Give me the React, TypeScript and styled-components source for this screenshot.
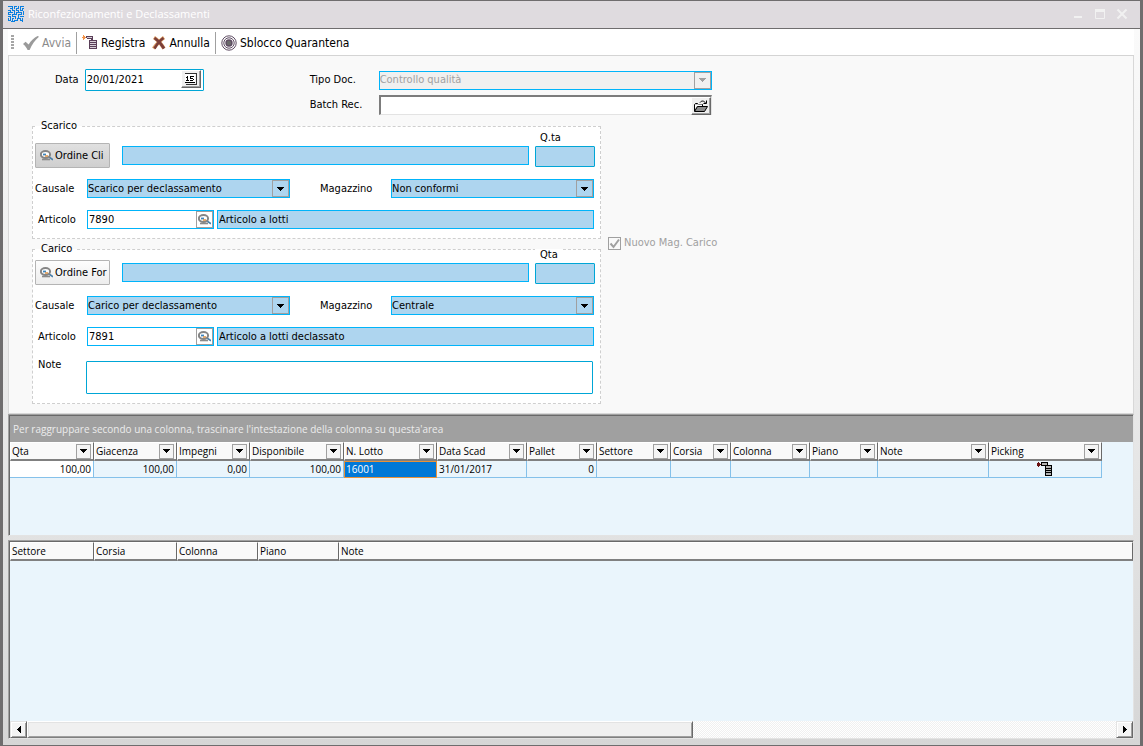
import React, { useId } from "react";
import styled, { createGlobalStyle } from "styled-components";

const formFont = '"DejaVu Sans Condensed", Tahoma, sans-serif';
const gridFont = '"Open Sans", "Segoe UI", sans-serif';

const GlobalStyle = createGlobalStyle`
  *, *::before, *::after { box-sizing: border-box; }
  body { margin: 0; background: #6f6d6e; }
  button, input, select, textarea { font: inherit; color: inherit; margin: 0; border-radius: 0; }
`;

/* ---------- window frame ---------- */

const Window = styled.div`
  min-height: 100vh;
  display: flex;
  flex-direction: column;
  padding: 1px 3px 1px;
  background: #6f6d6e;
  font: 11px/14px ${formFont};
  color: #000;
`;

const TitleBar = styled.header`
  display: flex;
  align-items: center;
  height: 28px;
  padding: 0 10px 2px 5px;
  gap: 4px;
  background: #dfdbdf;
  border-bottom: 1px solid #6f6d6e;
  color: #fff;
`;

const Title = styled.h1`
  flex: 1;
  margin: 0;
  font: 11px/16px ${gridFont};
`;

const CaptionButtons = styled.div`
  display: flex;
  gap: 6px;
`;

const CaptionButton = styled.button`
  width: 16px;
  height: 16px;
  padding: 0;
  border: 0;
  background: none;
  color: #f1f1f1;
  svg { display: block; }
`;

const Body = styled.main`
  flex: 1;
  display: flex;
  flex-direction: column;
  padding: 0 6px 6px 5px;
  background: linear-gradient(#fafafa, #e6e6e6 60%, #d6d6d6);
`;

/* ---------- toolbar ---------- */

const Toolbar = styled.nav`
  display: flex;
  align-items: center;
  height: 27px;
  padding: 1px 3px 0;
  background: #fff;
  border-bottom: 1px solid #d4d4d4;
  font-size: 12px;
  line-height: 16px;
`;

const Grip = styled.span`
  width: 3px;
  height: 15px;
  margin-right: 4px;
  background: repeating-linear-gradient(#a6a6a6 0 2px, #fff 2px 3px);
`;

const ToolGroup = styled.div`
  display: flex;
  gap: 7px;
  padding: 0 5px;
  & + & { border-left: 1px solid #a0a0a0; }
`;

const ToolButton = styled.button`
  display: flex;
  align-items: center;
  gap: 3px;
  height: 22px;
  padding: 0;
  border: 0;
  background: none;
  white-space: nowrap;
  &:disabled { color: #8a8a8a; }
  svg { flex: none; }
`;

/* ---------- form ---------- */

const FormPanel = styled.form`
  padding: 13px 23px 9px;
  background: #f9f9f9;
  border: solid #d8d8d8;
  border-width: 0 1px 1px;
`;

const TopFields = styled.div`
  display: flex;
  align-items: flex-start;
  gap: 106px;
  padding-left: 23px;
`;

const DateGroup = styled.div`
  display: flex;
  align-items: center;
  gap: 6px;
`;

const DocGroup = styled.div`
  display: grid;
  grid-template-columns: 69px 333px;
  grid-template-rows: 20px 20px;
  align-items: center;
  row-gap: 5px;
  padding-top: 1px;
`;

const Label = styled.label<{ $indent?: number }>`
  padding-left: ${(p) => p.$indent ?? 0}px;
  white-space: nowrap;
`;

const NotesLabel = styled(Label)`
  align-self: start;
`;

const DateBox = styled.div`
  display: flex;
  width: 119px;
  height: 22px;
  padding-right: 2px;
  background: #fff;
  border: 1px solid #00a6d6;
  border-radius: 1px;
`;

const BevelButton = styled.button`
  display: flex;
  align-items: center;
  justify-content: center;
  width: 20px;
  height: 18px;
  padding: 0;
  background: #f0f0f0;
  border: 1px solid;
  border-color: #fff #696969 #696969 #fff;
  box-shadow: inset -1px -1px #a0a0a0;
`;

const SunkenBox = styled.div`
  display: flex;
  height: 20px;
  background: #fff;
  border: solid;
  border-width: 2px 1px 1px 2px;
  border-color: #7c7c7c #e3e3e3 #e3e3e3 #7c7c7c;
`;

const BareInput = styled.input`
  flex: 1;
  min-width: 0;
  padding: 0 1px;
  border: 0;
  background: none;
  outline: 0;
`;

const Columns = styled.div`
  display: flex;
  align-items: flex-start;
  gap: 7px;
  margin-top: 5px;
`;

const Groups = styled.div`
  display: flex;
  flex-direction: column;
  gap: 4px;
  width: 569px;
`;

const Group = styled.fieldset`
  min-width: 0;
  margin: 0;
  padding: 0 6px 9px 2px;
  background: #fff;
  border: 1px dashed #cfcfcf;
`;

const Legend = styled.legend`
  margin-left: 1px;
  padding: 0 5px;
  line-height: 12px;
`;

const OrderRow = styled.div<{ $top: number }>`
  display: flex;
  align-items: center;
  height: ${(p) => p.$top + 25}px;
  margin-right: -1px;
  padding-top: ${(p) => p.$top}px;
`;

const OrderButton = styled.button<{ $pressed?: boolean }>`
  display: flex;
  align-items: center;
  gap: 2px;
  width: 75px;
  height: 25px;
  margin-right: 12px;
  padding: 0 4px;
  white-space: nowrap;
  border: 1px solid #b4b4b4;
  border-radius: 1px;
  background: ${(p) =>
    p.$pressed ? "linear-gradient(#e0e0e0, #cfcfcf)" : "linear-gradient(#fdfdfd, #ededed)"};
  svg { flex: none; }
`;

const BlueInput = styled.input`
  flex: 1;
  min-width: 0;
  height: 19px;
  padding: 0 1px;
  background: #aed5ef;
  border: 1px solid #00b4fa;
  outline: 0;
`;

const QuantityField = styled.div`
  display: flex;
  flex-direction: column;
  gap: 2px;
  width: 60px;
  margin: -12px 0 0 6px;
  ${BlueInput} {
    flex: none;
    height: 21px;
    border-color: #00a6d6;
    border-radius: 1px;
  }
`;

const QuantityLabel = styled.label`
  align-self: flex-start;
  padding: 0 5px;
  background: #fff;
  line-height: 12px;
`;

const FieldGrid = styled.div`
  display: grid;
  grid-template-columns: 52px 203px 101px 203px;
  align-items: center;
  row-gap: 12px;
  margin-top: 11px;
`;

const ArticleFields = styled.div`
  grid-column: 2 / -1;
  display: flex;
  gap: 3px;
`;

const LookupBox = styled.div`
  display: flex;
  width: 127px;
  height: 19px;
  background: #fff;
  border: 1px solid #00b4fa;
`;

const LookupButton = styled.button`
  display: flex;
  align-items: center;
  justify-content: center;
  width: 17px;
  padding: 0;
  background: #fff;
  border: 1px solid #a0a0a0;
`;

const NotesArea = styled.textarea`
  grid-column: 2 / -1;
  display: block;
  height: 33px;
  margin: 3px 1px 0 -1px;
  background: #fff;
  border: 1px solid #00a6d6;
  border-radius: 1px;
  outline: 0;
  resize: none;
`;

const SelectWrap = styled.div`
  position: relative;
  height: 19px;
`;

const Select = styled.select`
  appearance: none;
  display: block;
  width: 100%;
  height: 19px;
  padding: 0 20px 0 0;
  line-height: 14px;
  background: #aed5ef;
  border: 1px solid #00b4fa;
  outline: 0;
  &:disabled { background: #f0f0f0; color: #a0a0a0; opacity: 1; }
`;

const SelectArrow = styled.span<{ $muted?: boolean }>`
  position: absolute;
  top: 1px;
  right: 1px;
  display: flex;
  align-items: center;
  justify-content: center;
  width: 17px;
  height: 17px;
  border: 1px solid #a0a0a0;
  color: ${(p) => (p.$muted ? "#a0a0a0" : "#000")};
  pointer-events: none;
`;

const CheckLabel = styled.label`
  display: flex;
  align-items: center;
  gap: 3px;
  margin-top: 116px;
  color: #a0a0a0;
`;

const CheckInput = styled.input`
  appearance: none;
  width: 13px;
  height: 13px;
  background: #f9f9f9;
  border: 1px solid #a0a0a0;
`;

const CheckBox = styled.span`
  position: relative;
  display: flex;
  svg { position: absolute; inset: 0; pointer-events: none; }
`;

/* ---------- grids ---------- */

const GridPanel = styled.section<{ $grow?: boolean }>`
  display: flex;
  flex-direction: column;
  flex: ${(p) => (p.$grow ? "1 1 auto" : "none")};
  min-height: 122px;
  background: #eaf5fc;
  border: solid;
  border-width: 1px;
  border-color: #a0a0a0 #e3e3e3 #e3e3e3 #a0a0a0;
  box-shadow: inset 1px 1px #696969;
  padding: 1px 0 0 1px;
  font: 10px/14px ${gridFont};
  & + & { margin-top: 4px; }
`;

const GroupBar = styled.div`
  height: 26px;
  padding: 6px 3px;
  background: #a0a0a0;
  color: #ececec;
`;

const Table = styled.table<{ $fill?: boolean }>`
  table-layout: fixed;
  border-collapse: separate;
  border-spacing: 0;
  width: ${(p) => (p.$fill ? "100%" : "0")};
`;

const Col = styled.col<{ $w?: number }>`
  width: ${(p) => (p.$w ? `${p.$w}px` : "auto")};
`;

const HeadCell = styled.th`
  height: 19px;
  padding: 0;
  background: #f9f9f9;
  border: solid;
  border-width: 1px 1px 2px;
  border-color: #fff #696969 #808080 #fff;
  font-weight: 400;
  text-align: left;
`;

const HeadContent = styled.div`
  display: flex;
  align-items: center;
  justify-content: space-between;
  height: 16px;
  padding: 0 2px 0 1px;
  white-space: nowrap;
`;

const FilterButton = styled.button`
  display: flex;
  align-items: center;
  justify-content: center;
  width: 15px;
  height: 15px;
  padding: 0;
  background: #f4f4f4;
  border: 1px solid #a0a0a0;
`;

type CellKind = "plain" | "number" | "first" | "selected" | "icon";

const Cell = styled.td<{ $kind?: CellKind }>`
  height: 17px;
  padding: 0 2px;
  line-height: 14px;
  text-align: ${(p) =>
    p.$kind === "number" || p.$kind === "first" ? "right" : p.$kind === "icon" ? "center" : "left"};
  background: ${(p) =>
    p.$kind === "first" ? "#fff" : p.$kind === "selected" ? "#0078d7" : "transparent"};
  color: ${(p) => (p.$kind === "selected" ? "#fff" : "#000")};
  border: solid #85c1ea;
  border-width: 0 1px 1px 0;
  ${(p) => p.$kind === "selected" && "outline: 1px solid #e8923a; outline-offset: -1px;"}
  svg { display: block; margin: 0 auto; }
`;

const ScrollBar = styled.div`
  display: flex;
  height: 17px;
  margin-top: auto;
`;

const ScrollButton = styled.button`
  display: flex;
  align-items: center;
  justify-content: center;
  flex: none;
  width: 17px;
  padding: 0;
  background: #f4f4f4;
  border: 1px solid;
  border-color: #e3e3e3 #696969 #696969 #e3e3e3;
  box-shadow: inset 1px 1px #fff, inset -1px -1px #a0a0a0;
`;

const ScrollTrack = styled.div`
  flex: 1;
  background: repeating-conic-gradient(#f0f0f0 0 25%, #fff 0 50%) 0 0 / 2px 2px;
`;

const ScrollThumb = styled.div`
  width: 61.2%;
  height: 17px;
  background: #f0f0f0;
  border: 1px solid;
  border-color: #fff #696969 #808080 #fff;
  box-shadow: inset 1px 1px #e3e3e3, inset -1px -1px #a0a0a0;
`;

/* ---------- icons ---------- */

const DownArrow = () => (
  <svg width="7" height="4" viewBox="0 0 7 4" shapeRendering="crispEdges" fill="currentColor">
    <path d="M0 0h7v1H0zM1 1h5v1H1zM2 2h3v1H2zM3 3h1v1H3z" />
  </svg>
);

const SideArrow = ({ right = false }: { right?: boolean }) => (
  <svg width="4" height="7" viewBox="0 0 4 7" shapeRendering="crispEdges">
    <path d={right ? "M0 0h1v1h1v1h1v1h1v1H3v1H2v1H1v1H0z" : "M4 0H3v1H2v1H1v1H0v1h1v1h1v1h1v1h1z"} />
  </svg>
);

const MazeLogo = () => (
  <svg width="16" height="16" viewBox="0 0 16 16" fill="none" stroke="#0a7fe0" shapeRendering="crispEdges">
    <path d="M0 .5h5M1.500 2.500h3M4.500 0v5M6.500 0v3M6 .5h3M8.500 2v3M8 2.500h3M10.500 0v3M12.500 0v5M12 .5h4M14.500 2v3M14 2.500h2M0 4.500h3M2.500 4v3M4 4.500h3M6.500 4v4M8 4.500h3M10.500 4v3M12 4.500h2M0 6.500h5M.5 6v3M8.500 6v3M8 6.500h6M13.500 6v3M15.500 5v4M0 8.500h3M4.500 8v3M4 8.500h5M10 8.500h3M10.500 8v4M12 10.500h4M2.500 10v4M0 10.500h3M4 10.500h4M7.500 10v3M.5 12v3M4.500 12v4M4 12.500h2M9 12.500h4M12.500 12v3M14.500 12v4M9.500 12v3M0 14.500h3M6 14.500h4M12 14.500h3M6.500 14v2M3 15.500h3" />
  </svg>
);

const CheckIcon = () => (
  <svg width="16" height="16" viewBox="0 0 16 16" fill="#9a9a9a">
    <path d="M0 9l2.600-2.200 3 2.600C8 5.600 11 2.700 14.600 1L16 1.800C12 5.200 9 9.600 6.600 15H4.600C3.500 12.600 2 10.600 0 9z" />
  </svg>
);

const RegisterIcon = () => (
  <svg width="16" height="16" viewBox="0 0 16 16" shapeRendering="crispEdges">
    <path d="M0 2h1V0h1v1h1v1h1v1H3v1H2v1H1V3H0z" fill="#f4944a" />
    <path d="M4 1h7v4H9V4H5V3H4zM7 5h8v9H7z" fill="#5a3f58" />
    <path d="M5 2h5v1H5zM8 6h6v1H8zM8 8h6v1H8zM8 10h6v1H8zM8 12h6v1H8z" fill="#d8d0d8" />
  </svg>
);

const CancelIcon = () => (
  <svg width="14" height="14" viewBox="0 0 14 14">
    <path d="M2 1.500c3 2 7 6 10 11M12 1.500C8.500 4 5 8 1.500 12.500" fill="none" stroke="#dc9a62" strokeWidth="3.600" />
    <path d="M2.500 2c3 2 7 6 9.500 10.500M11.500 2C8.500 4 5 8 2.500 12.500" fill="none" stroke="#7a3f3a" strokeWidth="2.600" />
  </svg>
);

const TargetIcon = () => (
  <svg width="16" height="16" viewBox="0 0 16 16" fill="none" stroke="#5e4c63">
    <circle cx="8" cy="8" r="7.200" strokeWidth="1" />
    <circle cx="8" cy="8" r="5.200" strokeWidth="1" />
    <circle cx="8" cy="8" r="3" fill="#6a6a6a" strokeWidth="1.400" />
  </svg>
);

const LookupIcon = () => (
  <svg width="13" height="11" viewBox="0 0 13 11">
    <path d="M9 7l4 2.800" stroke="#4a7fa8" strokeWidth="1.600" />
    <ellipse cx="5.500" cy="4.500" rx="4.600" ry="3.400" fill="#fff" stroke="#858585" strokeWidth="2" />
    <path d="M2 9.500h8" stroke="#8a8a8a" strokeWidth="1.600" />
    <path d="M3 4.500h3" stroke="#3f86bd" strokeWidth="1.800" />
    <path d="M5 6h3" stroke="#d88a3a" strokeWidth="1.400" />
  </svg>
);

const CalendarIcon = () => (
  <svg width="12" height="12" viewBox="0 0 12 12" shapeRendering="crispEdges">
    <path d="M0 0h12v12H1v-1h10V1H0z" fill="#333" />
    <path d="M0 1h10v9H0z" fill="#fff" />
    <path d="M0 9h10v1H0zM2 3h1v5H2zM1 4h1v1H1zM1 7h3v1H1zM5 3h4v1H5zM5 3h1v3H5zM5 5h3v1H5zM8 6h1v1H8zM5 7h3v1H5z" />
  </svg>
);

const FolderIcon = () => (
  <svg width="14" height="12" viewBox="0 0 14 12" fill="none" stroke="#000">
    <path d="M.5 11V4.500L1.500 3.500h2l1 1h4v2M.5 11.500l3-5h10l-3 5z" fill="#8c8c8c" />
    <path d="M1 4.500h7V6H3L1 9z" fill="#fff" stroke="none" />
    <path d="M6 2.500C7.500.5 10 .5 11.500 3M12.500.5v3h-3" />
  </svg>
);

const PickingIcon = () => (
  <svg width="16" height="14" viewBox="0 0 16 14" shapeRendering="crispEdges">
    <path d="M1 0h1v1h1v1h1v1H3v1H2v1H1V4H0V1h1z" fill="#6a1010" />
    <path d="M4 0h7v4H4zM8 3h7v11H8z" />
    <path d="M5 1h5v2H5zM9 4h5v2H9zM9 7h5v1H9zM9 9h5v1H9zM9 11h5v2H9z" fill="#b4b4b4" />
  </svg>
);

const CheckMark = () => (
  <svg width="13" height="13" viewBox="0 0 13 13" fill="none" stroke="#a0a0a0" strokeWidth="2">
    <path d="M2.500 6.500l3 3.500L11 2.500" />
  </svg>
);

/* ---------- parts ---------- */

const ComboBox = ({ id, value, disabled }: { id: string; value: string; disabled?: boolean }) => (
  <SelectWrap>
    <Select id={id} defaultValue={value} disabled={disabled}>
      <option>{value}</option>
    </Select>
    <SelectArrow $muted={disabled}><DownArrow /></SelectArrow>
  </SelectWrap>
);

type MovementProps = {
  legend: string;
  order: string;
  quantity: string;
  reason: string;
  warehouse: string;
  article: string;
  description: string;
  top: number;
  pressed?: boolean;
  notes?: boolean;
};

const MovementGroup = (p: MovementProps) => {
  const id = useId();
  return (
    <Group>
      <Legend>{p.legend}</Legend>
      <OrderRow $top={p.top}>
        <OrderButton type="button" $pressed={p.pressed}><LookupIcon />{p.order}</OrderButton>
        <BlueInput aria-label={p.order} />
        <QuantityField>
          <QuantityLabel htmlFor={`${id}q`}>{p.quantity}</QuantityLabel>
          <BlueInput id={`${id}q`} />
        </QuantityField>
      </OrderRow>
      <FieldGrid>
        <Label htmlFor={`${id}c`}>Causale</Label>
        <ComboBox id={`${id}c`} value={p.reason} />
        <Label htmlFor={`${id}m`} $indent={30}>Magazzino</Label>
        <ComboBox id={`${id}m`} value={p.warehouse} />
        <Label htmlFor={`${id}a`} $indent={3}>Articolo</Label>
        <ArticleFields>
          <LookupBox>
            <BareInput id={`${id}a`} defaultValue={p.article} />
            <LookupButton type="button" aria-label="Cerca articolo"><LookupIcon /></LookupButton>
          </LookupBox>
          <BlueInput aria-label="Descrizione articolo" defaultValue={p.description} />
        </ArticleFields>
        {p.notes && (
          <>
            <NotesLabel htmlFor={`${id}n`} $indent={3}>Note</NotesLabel>
            <NotesArea id={`${id}n`} />
          </>
        )}
      </FieldGrid>
    </Group>
  );
};

const lotColumns: { name: string; width: number; value?: string; kind?: CellKind }[] = [
  { name: "Qta", width: 84, value: "100,00", kind: "first" },
  { name: "Giacenza", width: 83, value: "100,00", kind: "number" },
  { name: "Impegni", width: 73, value: "0,00", kind: "number" },
  { name: "Disponibile", width: 94, value: "100,00", kind: "number" },
  { name: "N. Lotto", width: 93, value: "16001", kind: "selected" },
  { name: "Data Scad", width: 90, value: "31/01/2017" },
  { name: "Pallet", width: 70, value: "0", kind: "number" },
  { name: "Settore", width: 74 },
  { name: "Corsia", width: 60 },
  { name: "Colonna", width: 79 },
  { name: "Piano", width: 68 },
  { name: "Note", width: 111 },
  { name: "Picking", width: 113, kind: "icon" },
];

const placeColumns: { name: string; width?: number }[] = [
  { name: "Settore", width: 84 },
  { name: "Corsia", width: 83 },
  { name: "Colonna", width: 81 },
  { name: "Piano", width: 81 },
  { name: "Note" },
];

export default function App() {
  return (
    <Window>
      <GlobalStyle />
      <TitleBar>
        <MazeLogo />
        <Title>Riconfezionamenti e Declassamenti</Title>
        <CaptionButtons>
          <CaptionButton aria-label="Riduci a icona">
            <svg width="16" height="16" fill="currentColor"><path d="M4 10h8v2H4z" /></svg>
          </CaptionButton>
          <CaptionButton aria-label="Ingrandisci">
            <svg width="16" height="16" fill="none" stroke="currentColor"><path d="M3.500 4v8.500h9V4" /><path d="M3 3h10v3H3z" fill="currentColor" stroke="none" /></svg>
          </CaptionButton>
          <CaptionButton aria-label="Chiudi">
            <svg width="16" height="16" stroke="currentColor" strokeWidth="2"><path d="M3.500 3.500l9 9M12.500 3.500l-9 9" /></svg>
          </CaptionButton>
        </CaptionButtons>
      </TitleBar>
      <Body>
        <Toolbar>
          <Grip />
          <ToolGroup>
            <ToolButton disabled><CheckIcon />Avvia</ToolButton>
          </ToolGroup>
          <ToolGroup>
            <ToolButton><RegisterIcon />Registra</ToolButton>
            <ToolButton><CancelIcon />Annulla</ToolButton>
          </ToolGroup>
          <ToolGroup>
            <ToolButton><TargetIcon />Sblocco Quarantena</ToolButton>
          </ToolGroup>
        </Toolbar>

        <FormPanel>
          <TopFields>
            <DateGroup>
              <Label htmlFor="data">Data</Label>
              <DateBox>
                <BareInput id="data" defaultValue="20/01/2021" />
                <BevelButton type="button" aria-label="Calendario"><CalendarIcon /></BevelButton>
              </DateBox>
            </DateGroup>
            <DocGroup>
              <Label htmlFor="tipo">Tipo Doc.</Label>
              <ComboBox id="tipo" value="Controllo qualità" disabled />
              <Label htmlFor="batch">Batch Rec.</Label>
              <SunkenBox>
                <BareInput id="batch" />
                <BevelButton type="button" aria-label="Apri"><FolderIcon /></BevelButton>
              </SunkenBox>
            </DocGroup>
          </TopFields>

          <Columns>
            <Groups>
              <MovementGroup
                legend="Scarico" order="Ordine Cli" quantity="Q.ta"
                reason="Scarico per declassamento" warehouse="Non conformi"
                article="7890" description="Articolo a lotti" top={11} pressed
              />
              <MovementGroup
                legend="Carico" order="Ordine For" quantity="Qta"
                reason="Carico per declassamento" warehouse="Centrale"
                article="7891" description="Articolo a lotti declassato" top={5} notes
              />
            </Groups>
            <CheckLabel>
              <CheckBox>
                <CheckInput type="checkbox" defaultChecked disabled />
                <CheckMark />
              </CheckBox>
              Nuovo Mag. Carico
            </CheckLabel>
          </Columns>
        </FormPanel>

        <GridPanel>
          <GroupBar>Per raggruppare secondo una colonna, trascinare l'intestazione della colonna su questa'area</GroupBar>
          <Table>
            <colgroup>{lotColumns.map((c) => <Col key={c.name} $w={c.width} />)}</colgroup>
            <thead>
              <tr>
                {lotColumns.map((c) => (
                  <HeadCell key={c.name}>
                    <HeadContent>
                      {c.name}
                      <FilterButton aria-label={`Filtra ${c.name}`}><DownArrow /></FilterButton>
                    </HeadContent>
                  </HeadCell>
                ))}
              </tr>
            </thead>
            <tbody>
              <tr>
                {lotColumns.map((c) => (
                  <Cell key={c.name} $kind={c.kind}>{c.kind === "icon" ? <PickingIcon /> : c.value}</Cell>
                ))}
              </tr>
            </tbody>
          </Table>
        </GridPanel>

        <GridPanel $grow>
          <Table $fill>
            <colgroup>{placeColumns.map((c) => <Col key={c.name} $w={c.width} />)}</colgroup>
            <thead>
              <tr>
                {placeColumns.map((c) => (
                  <HeadCell key={c.name}><HeadContent>{c.name}</HeadContent></HeadCell>
                ))}
              </tr>
            </thead>
          </Table>
          <ScrollBar>
            <ScrollButton aria-label="Scorri a sinistra"><SideArrow /></ScrollButton>
            <ScrollTrack><ScrollThumb /></ScrollTrack>
            <ScrollButton aria-label="Scorri a destra"><SideArrow right /></ScrollButton>
          </ScrollBar>
        </GridPanel>
      </Body>
    </Window>
  );
}
